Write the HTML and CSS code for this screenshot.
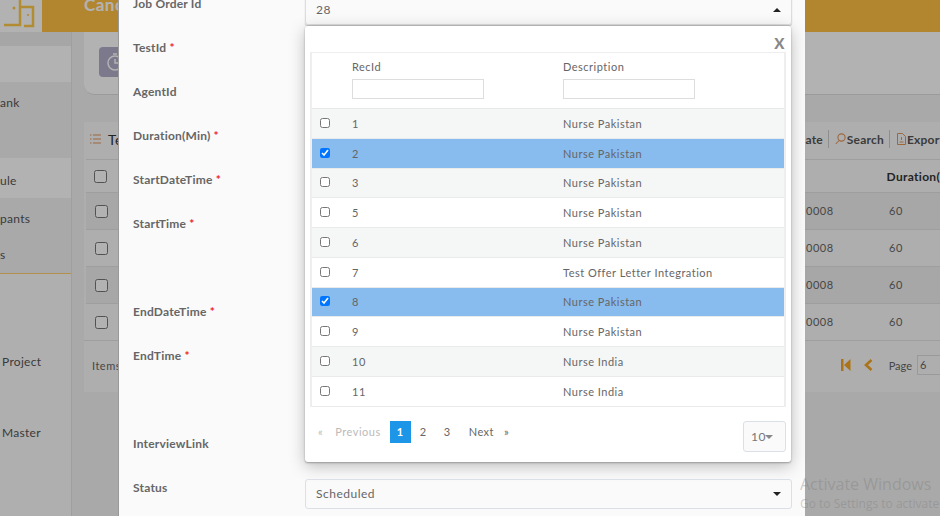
FILE: index.html
```html
<!DOCTYPE html>
<html>
  <head>
    <title>Candidate Test Schedule</title>
    <link rel="stylesheet" href="styles.css">
  </head>
  <body>
    <header class="topbar">
      <div class="logo">
        <svg width="36" height="30" viewBox="0 0 36 30" fill="none" stroke="#ffc94a" stroke-width="2.500">
          <path d="M4 25H20V0"/>
          <path d="M20 7H33V26H24"/>
          <circle cx="14" cy="8" r="1.500" fill="#ffc94a" stroke="none"/>
          <circle cx="28" cy="15" r="1.100" fill="#ffc94a" stroke="none"/>
        </svg>
      </div>
      <div class="title">Canc</div>
    </header>

    <div class="layout">
      <nav class="sidebar">
        <div class="side-top"></div>
        <div class="side-light"></div>
        <div class="side-item tall">ank</div>
        <div class="side-item light">ule</div>
        <div class="side-item pants">pants</div>
        <div class="side-item last">s</div>
        <div class="side-link project">Project</div>
        <div class="side-link master">Master</div>
      </nav>

      <main class="content">
        <div class="crumb">
          <div class="crumb-icon">
            <svg width="20" height="20" viewBox="0 0 20 20" fill="none" stroke="#fff" stroke-width="1.500">
              <circle cx="10" cy="11" r="7"/>
              <path d="M10 7v4h3M8 2h4"/>
            </svg>
          </div>
        </div>

        <section class="card">
          <div class="toolbar">
            <div class="tool-title">
              <svg width="11" height="12" viewBox="0 0 11 12" fill="none" stroke="#e0955a" stroke-width="1.200">
                <path d="M3 2h8M3 6h8M3 10h8M0 2h1.500M0 6h1.500M0 10h1.500"/>
              </svg>
              <span>Te</span>
            </div>
            <div class="tools">
              <span class="tool">ate</span>
              <span class="tool-sep"></span>
              <span class="tool">
                <svg width="11" height="12" viewBox="0 0 11 12" fill="none" stroke="#e0955a" stroke-width="1.100">
                  <circle cx="6.500" cy="4.500" r="3.600"/>
                  <path d="M4 7.500L.8 11"/>
                </svg>
                Search
              </span>
              <span class="tool-sep second"></span>
              <span class="tool">
                <svg width="9" height="12" viewBox="0 0 9 12" fill="none" stroke="#e0955a" stroke-width="1">
                  <path d="M.5.5h5l3 3v8h-8zM2.500 9h4M4.500 4v3"/>
                </svg>
                Export
              </span>
            </div>
          </div>

          <div class="bg-head">
            <span class="bg-check"><input type="checkbox"></span>
            <span class="bg-duration">Duration(</span>
          </div>
          <div class="bg-row odd"><span class="bg-check"><input type="checkbox"></span><span class="bg-code">0008</span><span class="bg-num">60</span></div>
          <div class="bg-row"><span class="bg-check"><input type="checkbox"></span><span class="bg-code">0008</span><span class="bg-num">60</span></div>
          <div class="bg-row odd"><span class="bg-check"><input type="checkbox"></span><span class="bg-code">0008</span><span class="bg-num">60</span></div>
          <div class="bg-row"><span class="bg-check"><input type="checkbox"></span><span class="bg-code">0008</span><span class="bg-num">60</span></div>

          <div class="bg-pager">
            <span class="items">Items</span>
            <div class="pager-right">
              <svg width="10" height="12" viewBox="0 0 10 12" fill="#f5a623">
                <path d="M0 0h2.500v12H0zM9.500 0v12L3 6z"/>
              </svg>
              <svg class="prev" width="9" height="12" viewBox="0 0 9 12" fill="none" stroke="#f5a623" stroke-width="2.600">
                <path d="M7.500 1L2 6l5.500 5"/>
              </svg>
              <span class="page-label">Page</span>
              <span class="page-input">6</span>
            </div>
          </div>
        </section>
      </main>
    </div>

    <div class="backdrop"></div>

    <div class="modal">
      <div class="row">
        <label>Job Order Id</label>
        <div class="field">
          <div class="select open">28<span class="caret up"></span></div>
          <div class="panel">
            <div class="panel-top"><span class="close">X</span></div>
            <table class="grid">
              <thead>
                <tr>
                  <th class="col-check"></th>
                  <th class="col-id">RecId<input type="text"></th>
                  <th>Description<input type="text"></th>
                </tr>
              </thead>
              <tbody>
                <tr><td><input type="checkbox"></td><td>1</td><td>Nurse Pakistan</td></tr>
                <tr class="selected"><td><input type="checkbox" checked></td><td>2</td><td>Nurse Pakistan</td></tr>
                <tr><td><input type="checkbox"></td><td>3</td><td>Nurse Pakistan</td></tr>
                <tr><td><input type="checkbox"></td><td>5</td><td>Nurse Pakistan</td></tr>
                <tr><td><input type="checkbox"></td><td>6</td><td>Nurse Pakistan</td></tr>
                <tr><td><input type="checkbox"></td><td>7</td><td>Test Offer Letter Integration</td></tr>
                <tr class="selected"><td><input type="checkbox" checked></td><td>8</td><td>Nurse Pakistan</td></tr>
                <tr><td><input type="checkbox"></td><td>9</td><td>Nurse Pakistan</td></tr>
                <tr><td><input type="checkbox"></td><td>10</td><td>Nurse India</td></tr>
                <tr><td><input type="checkbox"></td><td>11</td><td>Nurse India</td></tr>
              </tbody>
            </table>
            <div class="panel-foot">
              <div class="pages">
                <span class="muted">«</span>
                <span class="muted prev-link">Previous</span>
                <span class="current">1</span>
                <span class="num">2</span>
                <span class="num">3</span>
                <span class="next-link">Next</span>
                <span class="next-arrow">»</span>
              </div>
              <div class="page-size">10<span class="caret grey"></span></div>
            </div>
          </div>
        </div>
      </div>
      <div class="row"><label>TestId <i>*</i></label></div>
      <div class="row"><label>AgentId</label></div>
      <div class="row"><label>Duration(Min) <i>*</i></label></div>
      <div class="row"><label>StartDateTime <i>*</i></label></div>
      <div class="row tall"><label>StartTime <i>*</i></label></div>
      <div class="row"><label>EndDateTime <i>*</i></label></div>
      <div class="row tall"><label>EndTime <i>*</i></label></div>
      <div class="row"><label>InterviewLink</label></div>
      <div class="row">
        <label>Status</label>
        <div class="field"><div class="select">Scheduled<span class="caret"></span></div></div>
      </div>
    </div>

    <div class="watermark">
      <div class="wm-title">Activate Windows</div>
      <div class="wm-sub">Go to Settings to activate</div>
    </div>
  </body>
</html>
```

FILE: styles.css
```css
* {
  box-sizing: border-box;
}
html, body {
  height: 100%;
}
body {
  margin: 0;
  overflow: hidden;
  position: relative;
  font-family: "Lato", sans-serif;
  font-size: 12px;
  letter-spacing: 0.5px;
  color: #666;
  background-color: #f3f3f3;
}

/* page behind the modal */
.topbar {
  display: flex;
  height: 32px;
  background-color: #ffc143;
}
.logo {
  width: 42px;
  background-color: #fff;
}
.logo svg {
  display: block;
}
.title {
  margin-left: 42px;
  font-size: 17px;
  font-weight: 700;
  line-height: 10px;
  color: #fff;
}
.layout {
  display: flex;
  height: 484px;
}
.sidebar {
  width: 72px;
  flex-shrink: 0;
  background-color: #fbfbfb;
  border-right: 1px solid #e4e4e4;
  letter-spacing: 0.3px;
  color: #555;
  overflow: hidden;
}
.side-top {
  height: 14px;
  background-color: #eee;
}
.side-light {
  height: 36px;
  background-color: #fff;
}
.side-item {
  height: 38px;
  line-height: 36px;
  background-color: #f2f2f2;
}
.side-item.tall {
  height: 76px;
  line-height: 42px;
}
.side-item.light {
  height: 40px;
  line-height: 45px;
  background-color: #fff;
}
.side-item.pants {
  line-height: 41px;
}
.side-item.last {
  line-height: 38px;
  border-bottom: 1px solid #ffcf70;
}
.side-link {
  padding-left: 2px;
}
.project {
  margin-top: 80px;
}
.master {
  margin-top: 56px;
}
.content {
  flex: 1;
  min-width: 0;
}
.crumb {
  height: 63px;
  margin-left: 12px;
  padding: 15px 0 0 15px;
  background-color: #fff;
  border-bottom: 1px solid #ddd;
  border-radius: 0 0 0 10px;
}
.crumb-icon {
  display: flex;
  align-items: center;
  padding-left: 6px;
  width: 32px;
  height: 30px;
  background-color: #b0aec8;
  border-radius: 4px;
}
.card {
  margin: 27px 0 0 12px;
  height: 270px;
  background-color: #fafafa;
}
.toolbar {
  display: flex;
  justify-content: space-between;
  align-items: center;
  height: 37px;
  padding-bottom: 3px;
}
.tool-title {
  display: flex;
  align-items: center;
  gap: 7px;
  padding-left: 6px;
  font-size: 14px;
  color: #333;
}
.tools {
  display: flex;
  align-items: center;
  margin-right: -4px;
}
.tool {
  display: flex;
  align-items: center;
  gap: 1px;
  font-weight: 700;
  letter-spacing: 0.2px;
  color: #555;
}
.tool-sep {
  width: 1px;
  height: 18px;
  margin: 0 6px 0 5px;
  background-color: #ccc;
}
.tool-sep.second {
  margin-right: 7px;
}
.bg-head, .bg-row {
  display: flex;
  align-items: center;
  height: 37px;
  margin-left: 2px;
  border-top: 1px solid #e2e2e2;
  font-size: 11px;
}
.bg-head {
  height: 33px;
}
.bg-row.odd {
  background-color: #f0f0f0;
}
.bg-check {
  display: flex;
  width: 720px;
  padding-left: 9px;
}
.bg-head .bg-check {
  padding-left: 8px;
}
.bg-check input {
  width: 13px;
  height: 13px;
  margin: 0;
}
.bg-code {
  width: 83px;
  margin-bottom: 2px;
}
.bg-num {
  margin-bottom: 2px;
}
.bg-duration {
  font-size: 12px;
  font-weight: 700;
  letter-spacing: 0.3px;
  color: #333;
  margin-left: 85px;
  white-space: nowrap;
}
.bg-pager {
  display: flex;
  justify-content: space-between;
  align-items: center;
  height: 52px;
  padding: 0 0 3px 8px;
  border-top: 1px solid #e2e2e2;
  font-size: 11px;
}
.pager-right {
  display: flex;
  align-items: center;
  margin-right: -9px;
}
.prev {
  margin-left: 13px;
}
.page-label {
  margin-left: 16px;
  letter-spacing: 0;
}
.page-input {
  width: 32px;
  height: 20px;
  margin-left: 5px;
  padding-left: 2px;
  line-height: 18px;
  border: 1px solid #ddd;
}
.backdrop {
  position: absolute;
  inset: 0;
  background-color: rgba(0, 0, 0, 0.3);
}

/* modal */
.modal {
  position: absolute;
  left: 119px;
  top: -5px;
  width: 686px;
  height: 530px;
  padding-left: 14px;
  background-color: #fafafa;
  box-shadow: -1px 0 0 #999;
}
.row {
  display: flex;
  height: 44px;
}
.row.tall {
  height: 88px;
}
.row label {
  width: 172px;
  flex-shrink: 0;
  padding-top: 1px;
  font-weight: 700;
  letter-spacing: 0.2px;
  color: #666;
}
.row label i {
  font-style: normal;
  color: #e22;
}
.field {
  position: relative;
  width: 487px;
}
.select {
  position: relative;
  height: 30px;
  padding-left: 10px;
  line-height: 28px;
  border: 1px solid #dbe0e8;
  border-radius: 3px;
}
.select.open {
  border-color: #ddd;
  box-shadow: 0 1px 1px #bbb;
}
.caret {
  position: absolute;
  right: 10px;
  top: 12px;
  border-left: 4px solid transparent;
  border-right: 4px solid transparent;
  border-top: 4px solid #222;
}
.caret.up {
  border-top: 0;
  border-bottom: 4px solid #222;
}
.panel {
  position: absolute;
  top: 31px;
  left: 0;
  width: 486px;
  height: 436px;
  padding: 0 5px;
  background-color: #fff;
  border-radius: 3px;
  box-shadow: 0 1px 2px #999, 0 4px 16px rgba(0, 0, 0, 0.25);
}
.panel-top {
  height: 26px;
  text-align: right;
}
.close {
  display: inline-block;
  padding: 8px 1px 0 0;
  font-size: 15px;
  font-weight: 900;
  line-height: 18px;
  color: #888;
}
.grid {
  width: 476px;
  border-collapse: collapse;
  table-layout: fixed;
  border: 2px solid #eee;
  border-top-width: 1px;
  border-bottom-width: 1px;
}
.grid th {
  height: 56px;
  padding: 0 0 3px;
  font-weight: 400;
  text-align: left;
  font-size: 11px;
  border-bottom: 1px solid #e8e8e8;
}
.grid th input {
  display: block;
  width: 132px;
  height: 20px;
  margin-top: 6px;
  border: 1px solid #ddd;
}
.col-check {
  width: 41px;
}
.col-id {
  width: 211px;
}
.grid td {
  height: 29.750px;
  padding: 0;
  font-size: 11px;
  border-bottom: 1px solid #e8eaec;
}
.grid td input {
  display: block;
  width: 10px;
  height: 10px;
  margin: 0 0 1px 8px;
}
.grid tbody tr:nth-child(odd) {
  background-color: #f5f6f6;
}
.grid tbody tr.selected {
  background-color: #88bbee;
}
.panel-foot {
  display: flex;
  justify-content: space-between;
  padding-top: 14px;
}
.pages {
  display: flex;
  align-items: center;
  height: 22px;
  padding-left: 8px;
  font-size: 11px;
}
.muted {
  color: #bbb;
}
.prev-link {
  margin-left: 12px;
}
.current {
  width: 21px;
  height: 22px;
  margin-left: 9px;
  line-height: 22px;
  text-align: center;
  font-weight: 700;
  color: #fff;
  background-color: #1e96e8;
}
.num {
  margin-left: 9px;
  width: 15px;
}
.next-link {
  margin-left: 10px;
}
.next-arrow {
  margin-left: 10px;
}
.page-size {
  position: relative;
  width: 43px;
  height: 31px;
  padding-left: 7px;
  line-height: 29px;
  border: 1px solid #dbe0e8;
  border-radius: 3px;
  background-color: #fafafa;
  color: #777;
}
.caret.grey {
  right: 12px;
  top: 13px;
  border-top-color: #888;
}
.watermark {
  position: absolute;
  left: 800px;
  top: 473px;
  white-space: nowrap;
  font-family: "Open Sans", sans-serif;
  letter-spacing: 0;
  color: rgba(120, 120, 120, 0.35);
}
.wm-title {
  font-size: 16px;
}
.wm-sub {
  font-size: 12px;
}
```
